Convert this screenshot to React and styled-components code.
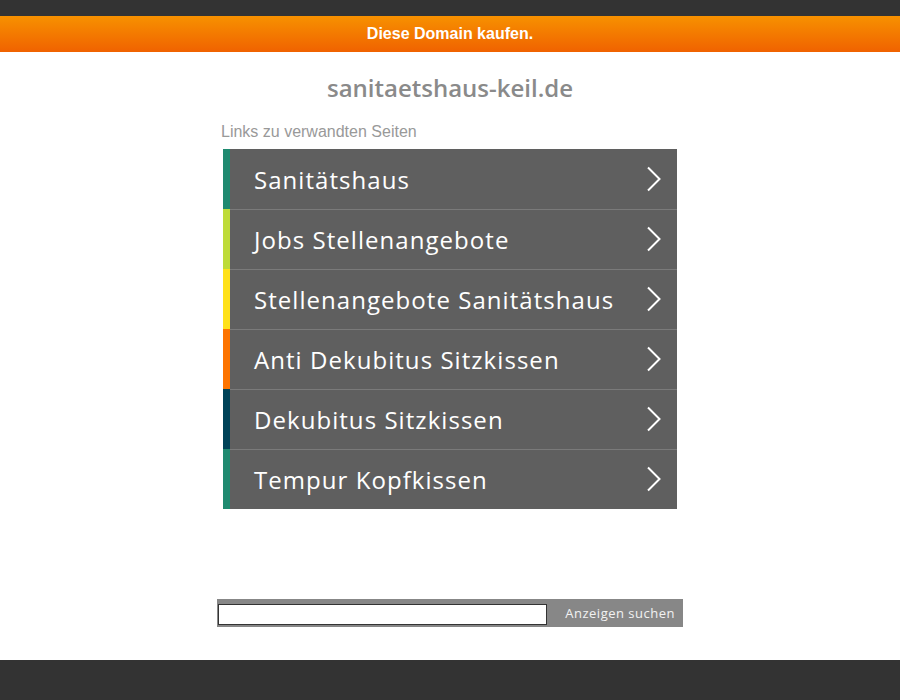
import React from 'react'
import styled, { createGlobalStyle } from 'styled-components'

const GlobalStyle = createGlobalStyle`
  html, body {
    margin: 0;
    padding: 0;
    background: #fff;
  }
  body {
    font-family: "Open Sans", "Liberation Sans", sans-serif;
  }
`

const Page = styled.div`
  width: 900px;
  height: 700px;
  display: flex;
  flex-direction: column;
`

const TopBar = styled.div`
  height: 16px;
  background: #333333;
`

const BuyBar = styled.a`
  height: 36px;
  display: flex;
  align-items: center;
  justify-content: center;
  background: linear-gradient(to bottom, #f79100, #f06200);
  color: #fff;
  font-family: "Liberation Sans", Arial, sans-serif;
  font-weight: bold;
  font-size: 16px;
  text-decoration: none;
`

const Main = styled.main`
  flex: 1;
  display: flex;
  flex-direction: column;
  align-items: center;
`

const Title = styled.h1`
  margin: 20px 0 0;
  height: 32px;
  line-height: 32px;
  font-size: 24px;
  font-weight: 600;
  color: #8a8a8a;
  letter-spacing: 0;
`

const Content = styled.div`
  width: 454px;
  margin-top: 19px;
`

const Caption = styled.div`
  margin-left: -2px;
  font-family: "Liberation Sans", Arial, sans-serif;
  font-size: 16px;
  color: #999;
  height: 18px;
  line-height: 18px;
`

const List = styled.ul`
  list-style: none;
  margin: 8px 0 0 0;
  padding: 0;
  width: 454px;
`

const Item = styled.li`
  display: flex;
  height: 60px;
  border-left: 7px solid ${p => p.$accent};
  background: #5f5f5f;
  box-sizing: border-box;
  & + & {
    box-shadow: inset 0 1px 0 #7a7a7a;
  }
`

const ItemLink = styled.a`
  flex: 1;
  display: flex;
  align-items: center;
  justify-content: space-between;
  padding: 0 15px 0 24px;
  color: #fff;
  font-size: 24px;
  letter-spacing: 1.05px;
  text-decoration: none;
`

const SearchBar = styled.form`
  margin-top: 90px;
  width: 466px;
  height: 28px;
  background: #878787;
  display: flex;
  align-items: center;
  box-sizing: border-box;
  padding: 0 0 0 1px;
`

const SearchInput = styled.input`
  width: 329px;
  height: 21px;
  margin-top: 3px;
  box-sizing: border-box;
  border: 1px solid #333;
  background: #fff;
  padding: 0;
`

const SearchButton = styled.button`
  flex: 1;
  border: none;
  background: none;
  color: #f2f2f2;
  font-family: "Open Sans", sans-serif;
  font-size: 13px;
  letter-spacing: 0.5px;
  text-align: right;
  padding: 0 8px 0 0;
  white-space: nowrap;
`

const Footer = styled.footer`
  height: 40px;
  background: #333333;
`

const Chevron = () => (
  <svg width="16" height="26" viewBox="0 0 16 26">
    <polyline points="2,1.5 13.5,13 2,24.5" fill="none" stroke="#fff" strokeWidth="2" />
  </svg>
)

const links = [
  { text: 'Sanitätshaus', color: '#1f8a70' },
  { text: 'Jobs Stellenangebote', color: '#bedb39' },
  { text: 'Stellenangebote Sanitätshaus', color: '#ffe11a' },
  { text: 'Anti Dekubitus Sitzkissen', color: '#fd7400' },
  { text: 'Dekubitus Sitzkissen', color: '#004358' },
  { text: 'Tempur Kopfkissen', color: '#1f8a70' },
]

export default function App() {
  return (
    <>
      <GlobalStyle />
      <Page>
        <TopBar />
        <BuyBar href="#">Diese Domain kaufen.</BuyBar>
        <Main>
          <Title>sanitaetshaus-keil.de</Title>
          <Content>
            <Caption>Links zu verwandten Seiten</Caption>
            <List>
              {links.map(l => (
                <Item key={l.text} $accent={l.color}>
                  <ItemLink href="#">
                    {l.text}
                    <Chevron />
                  </ItemLink>
                </Item>
              ))}
            </List>
          </Content>
          <SearchBar onSubmit={e => e.preventDefault()}>
            <SearchInput type="text" />
            <SearchButton type="submit">Anzeigen suchen</SearchButton>
          </SearchBar>
        </Main>
        <Footer />
      </Page>
    </>
  )
}
